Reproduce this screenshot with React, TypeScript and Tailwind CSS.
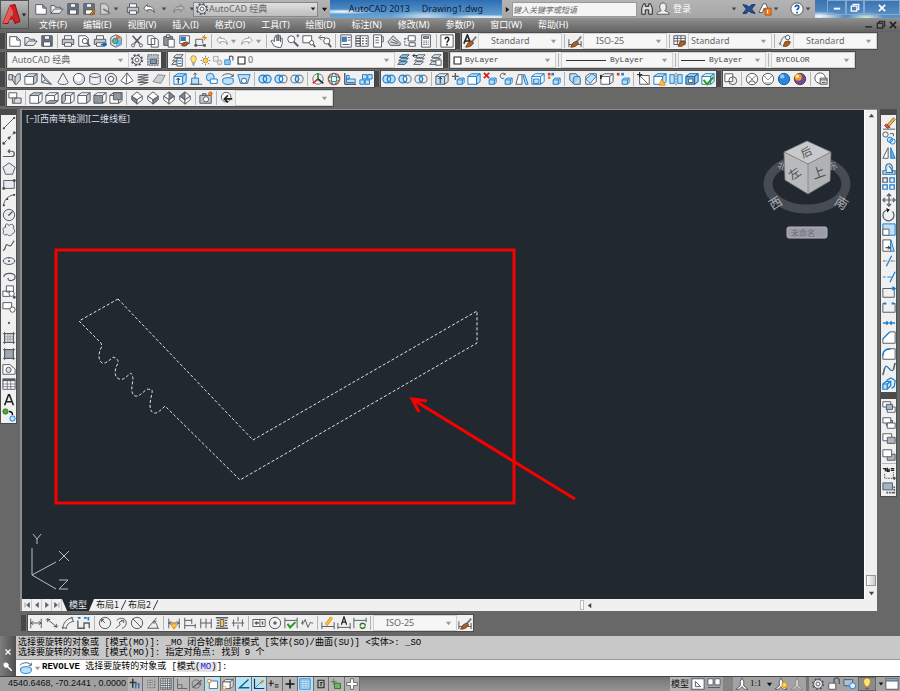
import type { ReactNode } from "react";
import clsx from "clsx";

const G = "#555c64";
const B = "#1b7fd0";
const L = "#bfe0f7";
const O = "#e08a1e";

const page = <path d="M2 3h8l4 4v7H2zM10 3v4h4" fill="#fff" />;
const folder = <path d="M1 13V4h4l1 2h6v2M1 13l4-5h10l-4 5z" fill="#e8edf2" />;
const floppy = (
  <>
    <path d="M2 2h12v12H2z" fill="#66737f" />
    <path d="M5 2h6v4H5zM4 9h8v5H4z" fill="#fff" />
  </>
);
const printer = (
  <>
    <path d="M4 6V2h8v4" fill="#fff" />
    <path d="M1.500 6h13v6h-13z" fill="#bcc4cc" />
    <path d="M4 10h8v4H4z" fill="#fff" />
  </>
);
const lens = (
  <>
    <circle cx="6" cy="6" r="4" fill="#fff" />
    <path d="m9 9 5 5" strokeWidth="2.200" />
  </>
);
const undo = <path d="M6 3 2 7l4 4V9c4-1 7 0 8 3 0-5-3-7-8-7z" fill="#fff" />;
const redo = <path d="m10 3 4 4-4 4V9c-4-1-7 0-8 3 0-5 3-7 8-7z" fill="#fff" />;
const brush = (
  <>
    <path d="m15 3-5 6" stroke="#777" strokeWidth="2" />
    <path d="m10 8-4 2-3 5c4 0 7-1 9-5z" fill="#a8602c" stroke="#7a3e14" />
  </>
);
const gear = (
  <>
    <circle cx="8" cy="8" r="6" strokeWidth="2" strokeDasharray="2.400 2.300" />
    <circle cx="8" cy="8" r="5" fill="#eee" />
    <circle cx="8" cy="8" r="2.200" fill="#fff" />
  </>
);
const bulb = (
  <>
    <path d="M6 11c0-2-2-3-2-6a4 4 0 0 1 8 0c0 3-2 4-2 6z" fill="#ffe27a" stroke="#a9822b" />
    <path d="M6 13h4M7 15h2" />
  </>
);
const sheets = <path d="m4 5 3-3h8l-3 3zM3 9l3-3h8l-3 3zM2 13l3-3h8l-3 3z" fill="#eef3f7" />;
const cubeWith = (front: string, top: string, side: string, color = G) => (
  <g stroke={color}>
    <path d="M1 5h10v9H1z" fill={front} />
    <path d="m1 5 4-3h10l-4 3z" fill={top} />
    <path d="m11 5 4-3v9l-4 3z" fill={side} />
  </g>
);
const smallCube = (
  <g stroke={B}>
    <path d="M7 9h6v5H7z" fill={L} />
    <path d="m7 9 2-2h6l-2 2m2-2v5l-2 2" fill="none" />
  </g>
);
const diamond = (a: string, b: string, c: string) => (
  <>
    <path d="m8 1 6 5-6 4-6-4z" fill={a} />
    <path d="M2 6v4l6 5v-5z" fill={b} />
    <path d="M14 6v4l-6 5v-5z" fill={c} />
  </>
);
const rings = (left: string, right: string, mid: string) => (
  <g strokeWidth="1.300">
    <circle cx="5.500" cy="8" r="4.500" fill={left} stroke={left === "none" ? "#7b8289" : B} />
    <circle cx="10.500" cy="8" r="4.500" fill={right} stroke={right === "none" ? "#7b8289" : B} />
    <path d="M8 4.300a4.500 4.500 0 0 1 0 7.400 4.500 4.500 0 0 1 0-7.400z" fill={mid} stroke={B} />
  </g>
);
const hdim = <path d="M2 3v11M14 3v11M2 8h12M5 6 2 8l3 2M11 6l3 2-3 2" />;
const stack = (a: string, b: string) => (
  <>
    <path d="M1 2h9v6H1z" fill={a} />
    <path d="M6 8h9v6H6z" fill={b} />
  </>
);

const drawings: Record<string, ReactNode> = {
  new: page,
  open: folder,
  save: floppy,
  saveas: <>{floppy}<path d="m9 14 5-6 1 2-4 5z" fill={O} stroke="#94590c" /></>,
  export: <><path d="M3 2h6l3 4v8H3z" fill="#d0d0d0" stroke="#777" /><path d="m6 8 8 5" stroke="#777" strokeWidth="2" /></>,
  print: printer,
  preview: <><path d="M2 2h8l3 3v9H2z" fill="#fff" /><circle cx="9" cy="8" r="3" fill="#fff" /><path d="m11 10 4 4" strokeWidth="2" /></>,
  publish: <>{printer}<path d="M9 12h6m-3-2 3 2-3 2" stroke="#1567b3" strokeWidth="2" /></>,
  dwf: <><path d="m8 1 6 3v8l-6 3-6-3V4z" fill="#d9e8ef" /><path d="M8 8V1l6 3z" fill="#e87435" stroke="none" /><path d="M8 8v7l6-3V5z" fill="#6bb4e3" stroke="none" /><circle cx="7" cy="8" r="3" fill="#7ab648" stroke={B} /></>,
  undo,
  redo,
  undoGray: <g stroke="#999">{undo}</g>,
  redoGray: <g stroke="#999">{redo}</g>,
  redoDim: <path d="m10 3 4 4-4 4V9c-4-1-7 0-8 3 0-5 3-7 8-7z" fill="#b9b9b9" stroke="#7d7d7d" />,
  cut: <><path d="m3 2 8 9M13 2 5 11" strokeWidth="1.800" /><circle cx="3.500" cy="13" r="1.800" /><circle cx="12.500" cy="13" r="1.800" /></>,
  copy: <path d="M2 2h6l2 2v8H2zM6 5h6l2 2v8H6z" fill="#fff" />,
  paste: <><path d="M2 3h10v10H2z" fill="#8f9194" /><path d="M5 1h4v3H5z" fill="#ddd" /><path d="M7 6h7v9H7z" fill="#fff" /></>,
  match: <><path d="M2 2h11v9H2z" fill="#fff" /><path d="M3 3h6v5H3z" fill="#317bb8" stroke="none" /><path d="m10 9-4 1-2 3c4 2 7 0 8-3z" fill="#a8602c" stroke="#7a3e14" /></>,
  block: <><path d="M2 6h8v5M2 6v7h10" /><path d="M12 1v6M9 4h6M10 2l4 4" stroke={O} /><path d="M1 12h2v2H1zM11 12h2v2h-2z" fill={G} /></>,
  pan: <path d="M5 14 1 8l2-1 2 2V4h1V2h2v6-7h2v7-6h2v7-4h2v6l-2 5z" fill="#fff" />,
  zoomrt: <>{lens}<path d="M12 2h3M13.500 0v4" /></>,
  zoomwin: <><path d="M1 2h10v8H1z" fill="#fff" /><circle cx="11" cy="10" r="2.500" fill="#fff" /><path d="m13 12 2 3" strokeWidth="2" /></>,
  zoomprev: <><circle cx="10" cy="8" r="3.500" fill="#fff" /><path d="m12 11 3 4" strokeWidth="2" /><path d="M8 4H2m2-3L1 4l3 3" /></>,
  props: <><path d="M2 1h12v14H2z" fill="#fff" /><path d="M3 3h6v6H3z" fill="#3a7fb8" stroke="none" /><path d="M10 4h3M10 7h3M4 12h8" /></>,
  dcenter: <><path d="M1 2h14v12H1z" fill="#fff" /><path d="M6 2v12M1 5h5M1 8h5M1 11h5M8 5h2M12 5h2M8 8h2M12 8h2M8 11h2M12 11h2" strokeWidth="1.500" /></>,
  palette: <><path d="M3 1h9v14H3z" fill="#fff" /><path d="M12 3h2v6h-2M5 4h4M5 7h4M5 10h4" /></>,
  sheetset: <path d="m1 9 6-7 8 8v3H4zM4 9l8 2M6 6l7 4" fill="#d7dbe0" />,
  markup: <><path d="M2 5h8v8H2z" strokeDasharray="2 1" /><path d="M6 2h8v6H6zM7 10h7v4H7z" fill="#fff" /></>,
  calc: <><path d="M3 1h10v14H3z" fill="#fff" /><path d="M5 3h6v2H5z" fill="#aaa" /><path d="M5 8h6M5 10h6M5 12h6" strokeDasharray="1.500 1" /></>,
  help: <><path d="M1 1h14v14H1z" fill="#fff" /><path d="M6 6c0-3 4-3 4 0 0 2-2 2-2 4M8 11v2" strokeWidth="1.800" stroke="#222" /></>,
  textstyle: <><path d="M1 11 5 1l4 10M2.500 8h5" stroke="#222" strokeWidth="1.800" />{brush}</>,
  dimstyle: <><path d="M1 6v9M15 8v7M1 12h14" />{brush}</>,
  tablestyle: <><path d="M1 2h13v10H1zM1 5h13M1 8h13M5 2v10M9 2v10" fill="#fff" /><path d="m12 8-4 1-2 5c4 1 7-1 8-5z" fill="#a8602c" stroke="#7a3e14" /></>,
  mlstyle: <><path d="M2 12C4 8 4 3 9 3M1 10l3 3" /><circle cx="11" cy="4" r="2.500" fill="#fff" /><path d="m12 8-4 1-2 5c4 1 7-1 8-5z" fill="#a8602c" stroke="#7a3e14" /></>,
  gear,
  wsave: <><path d="M2 2h12v12H2z" fill="#b4bcc4" strokeDasharray="2 1" /><path d="M5 7h7v5H5z" fill="#7f97ad" /></>,
  layers: <>{sheets}<path d="M8 6h6v9H8z" fill="#fff" /><path d="M9 9h4M9 12h4" stroke={B} /></>,
  bulb,
  sun: <><circle cx="8" cy="8" r="3.500" fill="#ffd34c" stroke="#a87a1b" /><path d="M8 1v2M8 13v2M1 8h2M13 8h2M3 3l1.500 1.500M12 12l1.500 1.500M13 3l-1.500 1.500M3 13l1.500-1.500" /></>,
  freeze: <g stroke="#999"><path d="M2 2h7v7H2z" fill="#eee" /><circle cx="11" cy="11" r="3.500" fill="#ddd" /></g>,
  unlock: <><path d="M1 7h8v7H1z" fill="#8cc8f0" stroke={B} /><path d="M8 7V3c0-2 5-2 5 0v5" strokeWidth="1.800" /></>,
  swatch: <path d="M3 3h10v10H3z" fill="#fff" stroke="#222" strokeWidth="1.600" />,
  layerCurrent: <path d="m4 5 3-3h8l-3 3zM3 9l3-3h8l-3 3zM2 13l3-3h8l-3 3z" fill="#9dcdf0" stroke="#33566f" />,
  layerPrev: <>{sheets}<path d="M6 3H1m2-2L1 3l2 2" stroke="#222" /></>,
  layerState: <>{sheets}<path d="M9 8h6v6H9z" fill="#fff" /></>,

  polysolid: <path d="M1 3h4v6H1zM5 3l3 3v8L5 9M8 6l3-4h3v7l-4 5H8" fill="#cfd4da" />,
  box: cubeWith("#fff", "#e9edf1", "#c3c9cf"),
  wedge: <path d="M2 2v10l11 2zM2 12l4-3 7 5M2 2l4 7" fill="#fff" />,
  cone: <path d="M8 1 2 12c1 3 11 3 12 0z" fill="#eef0f3" />,
  sphere: <><circle cx="8" cy="8" r="6.500" fill="#d3d9df" /><circle cx="7" cy="6.500" r="4" fill="#fff" stroke="none" /></>,
  cylinder: <path d="M2 4v8c1 3 11 3 12 0V4M2 4c1 3 11 3 12 0-1-3-11-3-12 0z" fill="#eef0f3" />,
  torus: <><circle cx="8" cy="8" r="6.500" fill="#e2e5e9" /><circle cx="8" cy="8" r="3" fill="#fff" /></>,
  pyramid: <path d="m8 1-7 9 6 4 8-4zM8 1 7 14" fill="#fff" />,
  helix: <path d="M2 3h12L2 6h12L2 9h12L2 12h12L4 15" strokeWidth="1.100" />,
  planar: <path d="m1 11 6-8 8 1-5 9z" fill="#c9cdd2" stroke="#888" />,
  extrude: <>{cubeWith("#eaf5fd", L, L, B)}<path d="M6 13V7M4 9l2-2 2 2" stroke="#123" /></>,
  presspull: <><path d="M3 7h8v7H3z" fill={L} stroke={B} /><path d="M7 7V1M5 3l2-2 2 2M1 14h14" /></>,
  sweep: <><circle cx="6" cy="6" r="4.500" fill={L} stroke={B} /><path d="M6 8h8v5H6z" fill="#fff" stroke={B} /></>,
  revolve: <><path d="M2 8c2-2 10-2 12 0v4c-2 3-10 3-12 0z" fill={L} stroke={B} /><path d="M1 5c3-4 11-4 13 0m0-3v3h-3" /></>,
  loft: <><path d="M1 3h14l-3 10H4z" fill={L} stroke={B} /><circle cx="8" cy="10" r="3" fill="#fff" /></>,
  union: rings(L, L, L),
  subtract: rings(L, "none", "#fff"),
  intersect: rings("none", "none", L),
  move3d: <><circle cx="8" cy="8" r="6" stroke="#777" /><path d="M8 8V1" stroke="#2b9b36" strokeWidth="2" /><path d="m2 13 6-5" stroke="#d33" strokeWidth="2" /><path d="m14 13-6-5" stroke="#234" strokeWidth="2" /></>,
  rotate3d: <><circle cx="8" cy="8" r="6.500" stroke="#d33" strokeWidth="1.500" /><ellipse cx="8" cy="8" rx="3" ry="6.500" stroke={B} /><ellipse cx="8" cy="8" rx="6.500" ry="3" stroke="#2b9b36" /></>,
  align3d: <><path d="M2 1v13M2 14h13" strokeWidth="1.600" /><path d="M4 8h10v4H4zM4 4h3v4H4z" fill={L} stroke={B} /></>,
  array3d: <g stroke={B} fill={L}><path d="M1 9h5v5H1zM7 9h5v5H7zM4 3h5v5H4zM10 3h5v5h-5z" /></g>,
  extrudeFace: <>{cubeWith(L, "#fff", "#dfeaf3")}<path d="M6 13V6M4 8l2-2 2 2" stroke="#036" /></>,
  moveFace: <>{smallCube}<path d="M5 1v8M1 5h8" strokeWidth="1.600" /></>,
  offsetFace: cubeWith("#fff", L, L, B),
  deleteFace: <>{smallCube}<path d="m1 1 6 6M7 1 1 7" stroke="#d32020" strokeWidth="2" /></>,
  rotateFace: <>{smallCube}<path d="M6 7a3 3 0 1 1 1-4M7 1v2H5" /></>,
  taperFace: <><path d="M1 14 4 3h4v11z" fill="#fff" /><path d="M9 3h2l4 11h-3z" fill={L} stroke={B} /></>,
  copyFace: <>{cubeWith("#fff", "#fff", "#fff", B)}<path d="M3 8h6v5H3z" fill={L} stroke={B} /></>,
  colorFace: <>{smallCube}<path d="M1 1h3v3H1z" fill="#d33" stroke="none" /><path d="M5 1h3v3H5z" fill={B} stroke="none" /><path d="M1 5h3v3H1z" fill={O} stroke="none" /></>,
  filletEdge: <><path d="M2 2h7l5 5v7H7L2 9z" fill={L} /><path d="M14 5H9a3 3 0 0 0-3 3v6" fill="#9dcdf0" stroke={B} /></>,
  chamferEdge: <><path d="M2 5 6 2h8v9l-4 3H2z" fill="#fff" /><path d="m2 8 7-6 5 3-7 8z" fill={L} stroke={B} /></>,
  copyEdge: <>{cubeWith("#fff", "#fff", "#eee")}<path d="M1 3v5" stroke="#111" strokeWidth="1.600" /></>,
  colorEdge: <>{smallCube}<path d="M1 1h3v3H1z" fill="#d33" stroke="none" /><path d="M6 1h3v3H6z" fill={B} stroke="none" /></>,
  imprint: <><path d="M3 4h11v10H3zM3 4l10 10" fill="#fff" /><path d="M3 0v6M0 3h6" stroke="#111" /></>,
  clean: <>{cubeWith("#fff", L, L, B)}<path d="m10 8 4 7H7z" fill="#ffc33b" stroke={O} /></>,
  separate: <><path d="M1 3h5v10H1zM10 3h5v10h-5z" fill={L} stroke={B} /><path d="M8 1v14" strokeDasharray="2 1" /></>,
  shell: <>{cubeWith("#5eb1e8", L, "#9dcdf0", "#175f9a")}<path d="M4 8h5v4H4z" fill="#fff" /></>,
  check: <>{cubeWith("#fff", "#fff", "#dfeaf3", B)}<path d="m3 9 4 5 7-8" stroke="#2b9b1c" strokeWidth="2.200" /></>,
  vs2d: <><path d="M1 2h9v9H1z" fill="#fff" /><circle cx="10" cy="10" r="4.500" /></>,
  vswire: <><circle cx="8" cy="8" r="6.500" fill="#fff" /><path d="m3 4 5 4 5-4M8 8l-4 5M8 8l4 5M4 12c2-2 6-2 8 0" strokeWidth=".8" /></>,
  vshidden: <><circle cx="8" cy="8" r="6.500" fill="#fff" /><path d="m3 4 5 5 5-5M5 12c2 1 4 1 6 0" strokeWidth=".8" /></>,
  vsreal: <><circle cx="8" cy="8" r="6.500" fill="#2b86d9" stroke="#1a61a5" /><circle cx="6" cy="5" r="2.500" fill="#8dc7f5" stroke="none" /></>,
  vsconcept: <><circle cx="8" cy="8" r="6.500" fill="#6b4a9b" stroke="#67402a" /><circle cx="6" cy="6" r="4" fill="#f0a030" stroke="none" /><circle cx="5" cy="5" r="1.800" fill="#ffe6a5" stroke="none" /></>,
  vsmanage: <><circle cx="7" cy="7" r="6" fill="#fff" /><path d="M7 7h8v7H7zM7 9h8M9 12h4" fill="#ddd" /></>,

  namedViews: <><path d="M1 2h9v6H1z" fill="#fff" /><path d="M5 8h10v6H5zM7 14v-4l3-2" fill="#ddd" /></>,
  vtop: cubeWith("#fff", "#c3c9cf", "#fff"),
  vbottom: <>{cubeWith("#fff", "#fff", "#fff")}<path d="m1 14 4-3h10l-4 3z" fill="#a4abb2" /></>,
  vleft: <>{cubeWith("#fff", "#fff", "#fff")}<path d="m1 5 4-3v9l-4 3z" fill="#b7bdc3" /></>,
  vright: cubeWith("#fff", "#fff", "#c3c9cf"),
  vfront: cubeWith("#8e969e", "#fff", "#fff"),
  vback: <>{cubeWith("#fff", "#fff", "#fff")}<path d="M5 2h9v8H5z" fill="#8e969e" /></>,
  isoSW: diamond("#fff", "#7d858d", "#fff"),
  isoSE: diamond("#fff", "#fff", "#7d858d"),
  isoNE: <>{diamond("#fff", "#fff", "#fff")}<path d="m8 1 6 5-6 4z" fill="#7d858d" /></>,
  isoNW: <>{diamond("#fff", "#fff", "#fff")}<path d="M8 1 2 6l6 4z" fill="#7d858d" /></>,
  camera: <><path d="M1 5h13v9H1zM4 5V3h4v2" fill="#c3c7cb" /><circle cx="8" cy="9.500" r="3" fill="#fff" /><circle cx="13" cy="3" r="2" fill="#f3872c" stroke="#d36010" /></>,
  viewPrev: <><circle cx="7" cy="7" r="5.500" fill="#fff" /><path d="M14 9H5m4-4L5 9l4 4" stroke="#222" strokeWidth="2" /></>,

  line: <><path d="M2 14 14 2" /><path d="M1 13h2v2H1zM13 1h2v2h-2z" fill="#333" stroke="none" /></>,
  xline: <><path d="M2 14 14 2" strokeDasharray="5 2" /><path d="M1 13h2v2H1zM7 7h2v2H7zM13 1h2v2h-2z" fill="#222" /></>,
  pline: <path d="M2 12h9a3 3 0 0 0 0-6H7M1 12h2M9 4 7 6l2 2" strokeWidth="1.400" />,
  polygon: <path d="m8 1 7 5-3 8H4L1 6z" fill="#e6ebef" />,
  rect: <><path d="M2 4h12v9H2z" fill="#e6ebef" /><path d="M1 12h2v2H1zM13 3h2v2h-2z" fill="#222" /></>,
  arc: <><path d="M2 14C2 8 7 3 14 2" /><path d="M1 13h2v2H1zM5 6h2v2H5zM13 1h2v2h-2z" fill="#333" stroke="none" /></>,
  circle: <><circle cx="8" cy="8" r="6.500" fill="#e6ebef" /><path d="m8 8 4-4M7 8h2" strokeWidth="1.600" /></>,
  cloud: <path d="M4 2c2-2 4 0 4 1 2-3 7-1 5 3 3 3 1 6-1 6-1 3-5 3-6 1-3 2-6-1-4-4-2-2 0-5 2-4z" fill="#e6ebef" />,
  spline: <path d="M1 13c4 0 2-9 6-6s4-2 7-5" strokeWidth="1.300" />,
  ellipse: <><ellipse cx="8" cy="8" rx="6.500" ry="4" fill="#e6ebef" /><path d="M7 8h2M1 8h1M14 8h1M8 4v1" strokeWidth="2" /></>,
  ellarc: <path d="M2 8c1-6 13-5 13 0 0 4-6 5-8 3M6 10h2" strokeWidth="1.300" />,
  insert: <><path d="M5 1h8v7H5zM1 7h8v6H1z" fill="#fff" /><circle cx="11" cy="10" r="3" fill="#fff" /><path d="M13 13h2v2h-2z" fill="#111" /></>,
  makeBlock: <><path d="M1 3h10v7H1z" fill="#fff" /><circle cx="12" cy="11" r="3" fill="#fff" /></>,
  point: <circle cx="8" cy="8" r="1.300" fill={G} stroke="none" />,
  hatch: <><path d="M3 3h10v10H3z" fill="#fff" /><path d="M1 3h14M1 13h14M3 1v14M13 1v14" /><path d="M3 6h10M3 8h10M3 10h10M6 3v10M8 3v10M10 3v10" strokeWidth=".5" /></>,
  gradient: <><path d="M3 3h10v10H3z" fill="#a3aab1" /><path d="M1 3h14M1 13h14M3 1v14M13 1v14" /></>,
  region: <><path d="M1 3h8l6 5v6H1z" fill="#fff" /><circle cx="7.500" cy="9" r="3" fill="#ddd" /></>,
  table: <><path d="M1 2h14v12H1z" fill="#fff" /><path d="M1 3.500h14" strokeWidth="2.500" /><path d="M1 8h14M1 11h14M6 4v10M10 4v10" strokeWidth=".8" /></>,
  mtext: <path d="m3 14 4.500-12h1L13 14M5 10h6" stroke="#222" strokeWidth="1.800" />,
  addsel: <><circle cx="4" cy="4" r="3" fill="#4fa93c" stroke="#2c7a1b" /><circle cx="12" cy="12" r="3" fill={L} stroke={B} /><path d="M8 4c3 0 4 1 4 4" stroke="#111" strokeWidth="1.600" /></>,

  erase: <><path d="m6 10 7-8 2 2-7 8z" fill="#f2c14c" stroke="#8f6420" /><path d="m3 11 2-2 4 4-3 1z" fill="#d45d4c" stroke="#963121" /><path d="M1 15h14" /></>,
  copyobj: <><circle cx="4" cy="4" r="3" /><circle cx="9" cy="10" r="3" fill={L} stroke={B} /><circle cx="12" cy="12" r="3" fill="none" stroke={B} /><path d="M9 3h4v3" /></>,
  mirror: <><path d="M7 2 1 14h6z" fill="#fff" /><path d="m10 2 5 12h-5z" fill="#5eb1e8" stroke={B} /></>,
  offset: <path d="M1 14v-4h4c-2-5 0-8 3-8s5 3 3 8h4v4zM4 12h8V9c-3-1-2-4-4-4" fill={L} stroke="#2f6f9f" strokeWidth="1.200" />,
  array: <g strokeWidth="1.400"><path d="M1 1h5v5H1z" /><path d="M9 1h5v5H9zM1 9h5v5H1zM9 9h5v5H9z" stroke={B} /></g>,
  move: <path d="M8 1v14M1 8h14M5.500 3.500 8 1l2.500 2.500M5.500 12.500 8 15l2.500-2.500M3.500 5.500 1 8l2.500 2.500M12.500 5.500 15 8l-2.500 2.500" strokeWidth="1.400" />,
  rotate: <><path d="M7 2a6.300 6.300 0 1 0 5 2" strokeWidth="1.400" /><path d="m5 0 4 2-3 3z" fill="#111" stroke="none" /></>,
  scale: <><path d="M1 1h14v13H1z" fill={L} stroke={B} /><path d="M1 7h7v7H1z" fill="#fff" /></>,
  stretch: <><path d="M1 1h9v13H1z" fill="#fff" /><path d="m10 1 4 13h-4z" fill={L} stroke={B} /><path d="M4 10h5M7 8l2 2-2 2" stroke="#111" /></>,
  trim: <><path d="M1 8h5M10 8h5" strokeDasharray="3 1" /><path d="m5 14 6-12" stroke={B} strokeWidth="1.500" /></>,
  extend: <><path d="M1 8h3M6 8h5" stroke={B} /><path d="m9 14 6-12" stroke={B} strokeWidth="1.500" /></>,
  breakpt: <><path d="M1 4h13v10H1V4" /><path d="M10 4h5M12 2l3 2-3 2" stroke={B} strokeWidth="1.600" /></>,
  break: <><path d="M4 4H1v10h14V4h-3" /><path d="M2 4h3M11 4h3" stroke={B} strokeWidth="2.400" /></>,
  join: <path d="M1 8h6m-2-2 2 2-2 2M15 8H9m2-2L9 8l2 2" stroke={B} strokeWidth="1.500" />,
  chamfer: <><path d="M1 14h14V1H9L1 9z" fill="#fff" /><path d="M1 9 9 1" stroke={B} strokeWidth="1.600" /></>,
  fillet: <><path d="M1 14h14V2H9C4 2 1 5 1 9z" fill="#fff" /><path d="M1 10c0-5 3-8 9-8" stroke={B} strokeWidth="1.600" /></>,
  blend: <><path d="M3 7 1 15M15 1l-2 8" strokeWidth="1.800" /><path d="M3 7c3-7 6 6 10 2" stroke={B} strokeWidth="1.500" /></>,
  explode: <><path d="m1 8 4-3h5v5l-4 4H1z" fill={L} stroke={B} strokeWidth="1.400" /><path d="m5 4 5-3 5 3-1 7-3 2M1 8h5v6M6 8l4-3" stroke={B} strokeWidth="1.400" /></>,
  front: <>{stack("#fff", "#fff")}<path d="M5 5h7v6H5z" fill="#9fb5c8" /></>,
  back: <><path d="M5 5h7v6H5z" fill="#aaa" />{stack("#fff", "#fff")}</>,
  above: <><path d="M1 2h10v8H1z" fill="#fff" /><path d="M6 6h9v7H6z" fill="#aeb4ba" /></>,
  under: <><path d="M6 7h9v7H6z" fill="#aeb4ba" /><path d="M1 2h10v8H1z" fill="#fff" /></>,
  textfront: <><path d="M1 3h3v3M6 2v4h2V3M10 3h4M10 5h4" strokeWidth="1.700" stroke="#222" /><path d="M3 9v5h10V7" strokeDasharray="2 1" /><path d="M13 13h2v2h-2z" fill="#111" /></>,
  hatchback: <><path d="M1 1h11v8H1z" fill="#9fb5c8" /><path d="M5 12h7v2M14 5v9" strokeDasharray="2 1" strokeWidth="2" /></>,

  dimlin: hdim,
  dimali: <path d="m1 5 3-3M12 14l3-3M3 4l10 8M3 7V4h3M13 9v3h-3" />,
  dimarc: <path d="M2 15C2 8 7 2 14 2M6 15c0-5 3-8 9-9M1 13l5 1M12 1l2 5" />,
  dimord: <><path d="M1 5v9h8M8 14V8h6v6" strokeWidth="1.500" /><path d="M1 2h3M8 2h3M13 1v4" stroke={B} strokeWidth="2" /></>,
  dimrad: <><circle cx="8" cy="8" r="6.500" /><path d="m8 8-4-4M4 7V4h3" /></>,
  dimjog: <path d="M3 5c4-4 11-3 11 3 0 4-3 6-5 6M2 14l5-4-1-3 5-2M8 5h3v3" />,
  dimdia: <><circle cx="8" cy="8" r="6.500" /><path d="m3 3 10 10" /></>,
  dimang: <path d="M12 2 2 14h13M9 6c3 2 4 4 4 8M9 9V6h3" />,
  qdim: <>{hdim}<path d="m8 7 3 4-3 4-3-4z" fill="#ffc33b" stroke={O} /></>,
  dimbase: <path d="M2 2v13M2 5h8M10 3v6M2 11h12M14 9v5" />,
  dimcont: <path d="M2 3v11M8 3v11M14 3v11M2 8h12" />,
  dimspace: <><path d="M1 2h14M1 14h14M2 5h3M2 8h3M2 11h3M11 5h3M11 8h3M11 11h3" strokeWidth="1.600" /><path d="M6 4h4v8H6z" fill="#ffc33b" /></>,
  dimbreak: <path d="M8 1v5M8 10v5M1 8h4M3 4v8M11 8h4M13 4v8M5 8h6" />,
  tol: <><path d="M1 4h14v8H1zM9 4v8" fill="#fff" /><path d="M3 8h5M5 6v4M12 6v4" strokeWidth="1.800" /></>,
  center: <><circle cx="8" cy="8" r="6.500" /><path d="M8 6v4M6 8h4" strokeWidth="1.700" /></>,
  inspect: <><path d="M1 2v12M15 2v12M1 5h14" /><path d="m4 9 3 4 6-6" stroke="#2b9b1c" strokeWidth="2.400" /></>,
  jogline: <path d="M1 8h3l2-4 3 9 3-6 1 1h2M3 5v5" />,
  dimedit: <><path d="M1 7v8M15 7v8M1 12h14" /><path d="m5 9 6-8 2 2-6 8z" fill="#ffc33b" stroke={O} /></>,
  dimtedit: <><path d="M1 8v7M15 8v7M1 13h14" /><path d="m5 10 3-9 3 9M6 7h4" stroke="#222" strokeWidth="1.400" /></>,
  dimupdate: <><path d="M1 2v12M15 2v5M1 5h14" /><path d="M8 11c1-4 6-3 6 0M14 12c-1 3-5 3-6 0" stroke="#2b7b1c" strokeWidth="1.600" /></>,

  infer: <><path d="M5 1v12M1 6h9" strokeWidth="2" stroke="#333" /><path d="M9 6v8M13 7v7" stroke={B} strokeWidth="2" /><path d="M9 8h5" stroke="#c33" /></>,
  snap: <path d="M3 3h8M3 6h8M3 9h8M13 2v11H3" strokeDasharray="1 1" strokeWidth="1.600" />,
  grid: <><path d="M1 1h14v14H1z" fill="#fff" /><path d="M4 1v14M7 1v14M10 1v14M13 1v14M1 4h14M1 7h14M1 10h14M1 13h14" /></>,
  ortho: <path d="M2 1v13h13M2 9h6v5" />,
  polar: <><circle cx="7" cy="8" r="5.500" /><path d="M2 13 14 3M7 8h7" strokeWidth="1.600" /></>,
  osnap: <><path d="M3 4h11v10H3z" fill="#fff" /><path d="M1 2h4v4H1z" fill="#fff" stroke={O} /></>,
  osnap3d: <>{cubeWith("#fff", "#eee", "#ddd")}<circle cx="3" cy="13" r="2" fill="#fff" stroke={O} /></>,
  otrack: <path d="M14 2 2 13h13" stroke="#08628f" strokeWidth="1.800" />,
  ducs: <><path d="M2 1v13h13" stroke="#235" strokeWidth="1.600" /><path d="m3 13 8-8" stroke={B} /><path d="m9 6 4-4 2 2-4 4z" fill={O} stroke="none" /></>,
  dyn: <path d="M4 3v8M1 7h7M9 9h5M9 12h5" stroke="#222" strokeWidth="1.500" />,
  lwt: <path d="M8 2v12M2 8h12" stroke="#111" strokeWidth="2" />,
  transp: <><path d="M1 1h14v14H1z" fill="#b9dcf5" stroke={B} /><path d="M1 3h14M1 6h14M1 9h14M1 12h14" strokeDasharray="1 1" stroke="#4a8fc8" /></>,
  quick: <path d="M4 3h8v10H4zM7 6h3M8 6v5" stroke="#222" strokeWidth="1.400" />,
  cycle: <><path d="M5 1v8M1 5h8" /><path d="M6 7h8v7H6z" fill="#70b564" stroke="#24701b" /></>,
  annomon: <path d="M6 1h4v5h5v4h-5v5H6v-5H1V6h5z" fill="#fff" />,
  layoutView: <><path d="M1 2h14v12H1z" fill="#fff" /><path d="M5 5v6h6z" /></>,
  quickView: <path d="M1 2h6v7H1zM9 2h6v7H9zM1 12h14" fill="#fff" />,
  scaleicon: <path d="M8 1 6 5v5l-5 4h4l3-3 3 3h4l-5-4V5z" fill="#fff" />,
  annovis: <><path d="M8 1 6 5v5l-5 4h4l3-3 3 3h4l-5-4V5z" fill="#fff" /><circle cx="12" cy="9" r="3" fill="#ffd34c" stroke={O} /></>,
  annoauto: <path d="M8 1 6 5v5l-5 4h4l3-3 3 3h4l-5-4V5z" fill="#ccc" stroke="#888" />,
  lock: <><path d="M2 7h8v7H2z" fill="#fff" /><path d="M8 7V4c0-4 6-4 6 0v4" strokeWidth="1.600" /></>,
  hw: <><path d="M1 3h10v7H1z" fill="#a8c4dc" /><circle cx="11" cy="10" r="3.500" fill="#d8eefc" stroke={B} /></>,
  cleanscr: <><path d="M1 2h14v12H1z" fill="#fff" /><path d="M1 4h14" strokeWidth="2.500" stroke="#68819a" /></>,

  binoculars: <path d="M2 14V7l2-5h2v3h4V2h2l2 5v7h-4V9H6v5z" fill="#ddd" stroke="#222" />,
  person: <path d="M1 14c0-3 3-3 5-4-3-3-2-9 2-9s5 6 2 9c2 1 5 1 5 4z" fill="#eee" />,
  exchange: <path d="m1 3 5 1 2 2 3-3h4l-4 5 4 5-5-1-2-2-3 3H1l4-5z" fill="#264f91" stroke="#1b3567" />,
  stayon: <><path d="M6 2 1 12h4l2-5 2 5h4L9 2z" fill="#fff" /><path d="M8 7h7v8H8z" fill="#ef7b22" stroke="#b95a10" /><path d="M11 9v4" stroke="#fff" /></>,
  infohelp: <><circle cx="8" cy="8" r="7" fill="#fff" /><path d="M6 6c0-3 4-3 4 0 0 2-2 2-2 3.500M8 11v2" stroke="#1b5fae" strokeWidth="2" /></>,
  wmin: <path d="M3 9h10" stroke="#fff" strokeWidth="3" />,
  wmax: <path d="M5 5V2h9v8h-3M2 5h9v8H2z" stroke="#fff" strokeWidth="2" />,
  wclose: <path d="m3 3 10 10M13 3 3 13" stroke="#fff" strokeWidth="2.600" />,
  mmin: <path d="M2 11h11" stroke="#222" strokeWidth="2.200" />,
  mmax: <path d="M5 5V2h9v8h-3M2 5h9v8H2z" stroke="#222" strokeWidth="1.800" />,
  mclose: <path d="m3 3 10 10M13 3 3 13" stroke="#222" strokeWidth="2.600" />,
  cclose: <path d="m3 3 10 10M13 3 3 13" stroke="#fff" strokeWidth="2.400" />,
  wrench: <path d="m14 14-8-8M2 4c0 4 3 5 5 3s1-5-3-5l2 3-2 1z" stroke="#fff" strokeWidth="2.400" />,
  first: <path d="M4 3v10M13 3 7 8l6 5z" fill={G} />,
  prev: <path d="M11 3 5 8l6 5z" fill={G} />,
  next: <path d="m5 3 6 5-6 5z" fill={G} />,
  last: <path d="M12 3v10M3 3l6 5-6 5z" fill={G} />,
};

const Icon = ({ name, className = "size-3.5" }: { name: string; className?: string }) => (
  <svg viewBox="0 0 16 16" fill="none" stroke={G} strokeWidth="1.100" className={clsx("shrink-0", className)} aria-hidden="true">
    {drawings[name]}
  </svg>
);

const Tool = ({ name, className }: { name: string; className?: string }) => (
  <button type="button" aria-label={name} className={clsx("flex shrink-0 items-center justify-center", className ?? "h-4 w-4")}>
    <Icon name={name} />
  </button>
);

const Caret = ({ className = "size-[7px] text-[#444]" }: { className?: string }) => (
  <svg viewBox="0 0 8 8" className={clsx("shrink-0", className)} aria-hidden="true">
    <path d="M1 2h6L4 6z" fill="currentColor" />
  </svg>
);

// "|" stands for a separator, "v" for a small drop-down arrow
const Tools = ({ items }: { items: string }) => (
  <>
    {items.split(" ").map((item, i) => {
      if (item === "|") return <span key={i} className="mx-0.5 my-px w-px shrink-0 self-stretch bg-[#b5b5b5]" />;
      if (item === "v") return <Caret key={i} className="mr-0.5 size-[7px] text-[#999]" />;
      return <Tool key={i} name={item} />;
    })}
  </>
);

const Grip = () => <span className="h-4 w-[7px] shrink-0 border-r-2 border-[#777] bg-[#474747]" />;

const Bar = ({ children }: { children: ReactNode }) => (
  <div className="flex h-4 shrink-0 items-center bg-[#f0f0f0] shadow-[0_0_0_1px_#4d4d4d]">{children}</div>
);

type ComboProps = {
  label: string;
  value: string;
  className: string;
  textClass?: string;
  children?: ReactNode;
};

const Combo = ({ label, value, className, textClass = "font-['Noto_Sans','Noto_Sans_CJK_SC',sans-serif] text-[9px] text-[#666]", children }: ComboProps) => (
  <label className={clsx("relative flex h-4 shrink-0 items-center border border-[#d0d0d0] bg-[#f6f6f6]", className)}>
    {children}
    <select aria-label={label} className={clsx("h-full min-w-0 flex-1 appearance-none bg-transparent leading-3 outline-none", textClass)}>
      <option>{value}</option>
    </select>
    <Caret className="mr-1 size-[7px] text-[#999]" />
  </label>
);

const mono = "font-['Liberation_Mono','Noto_Sans_CJK_SC',monospace] text-[8px] text-[#444]";

const menus = ["文件(F)", "编辑(E)", "视图(V)", "插入(I)", "格式(O)", "工具(T)", "绘图(D)", "标注(N)", "修改(M)", "参数(P)", "窗口(W)", "帮助(H)"];

const Header = () => (
  <header className="flex h-8 bg-gradient-to-b from-[#b4b4b4] to-[#9b9b9b]">
    <button type="button" aria-label="Application menu" className="z-10 flex h-[29px] w-[29px] shrink-0 items-center border border-[#555] bg-gradient-to-b from-[#bcbcbc] to-[#777]">
      <svg viewBox="0 0 20 24" className="h-[25px] w-5" aria-hidden="true">
        <path d="M2 21 9 3l5-1 5 17-5 2-2-5-4 1-1 4z" fill="#d31f26" stroke="#8b1015" />
        <path d="M9 3 2 21l5-1 5-11z" fill="#ee5750" />
        <path d="m9 13 2-5 1 5z" fill="#8f8f8f" />
      </svg>
      <Caret className="size-1.5 text-[#222]" />
    </button>
    <div className="flex min-w-0 flex-1 flex-col">
      <div className="flex h-[18px] items-center">
        <div className="flex w-[164px] shrink-0 items-center pl-1">
          <Tools items="new open save saveas export" />
          <Caret className="mr-1.5 size-1.5 text-[#444]" />
          <Tools items="print undo" />
          <Caret className="mx-1 size-1.5 text-[#444]" />
          <Tools items="redoDim" />
          <Caret className="ml-0.5 size-1.5 text-[#444]" />
        </div>
        <label className="flex h-[15px] w-[125px] shrink-0 items-center border border-[#888] bg-gradient-to-b from-[#e0e0e0] to-[#bdbdbd] px-px">
          <Icon name="gear" />
          <select aria-label="Workspace" className="min-w-0 flex-1 appearance-none bg-transparent font-['Noto_Sans','Noto_Sans_CJK_SC',sans-serif] text-[9px] leading-3 text-[#666] outline-none">
            <option>AutoCAD 经典</option>
          </select>
          <Caret className="size-1.5 text-[#222]" />
        </label>
        <span className="flex w-3 shrink-0 justify-center"><Caret className="size-[7px] text-[#111]" /></span>
        <h1 className="flex h-full min-w-0 flex-1 items-center justify-center gap-3 bg-[radial-gradient(ellipse_at_7%_65%,#fff_0%,transparent_16%),radial-gradient(ellipse_at_97%_95%,#f2faf8_0%,transparent_10%),radial-gradient(ellipse_at_84%_95%,#eaf6f4_0%,transparent_12%),radial-gradient(ellipse_at_55%_90%,#c4dcec_0%,transparent_25%),linear-gradient(#2d6db3,#6ba7d7)] font-['Noto_Sans',sans-serif] text-[9px] text-[#10203a]">
          <span>AutoCAD 2013</span>
          <span>Drawing1.dwg</span>
        </h1>
        <span className="flex w-2.5 shrink-0 justify-center"><Caret className="size-[7px] -rotate-90 text-[#111]" /></span>
        <input aria-label="搜索" placeholder="键入关键字或短语" className="h-[15px] w-[125px] shrink-0 border border-[#999] bg-[#f4f4f4] font-['Noto_Sans_CJK_SC',sans-serif] text-[8px] italic outline-none placeholder:text-[#666]" />
        <div className="flex w-[178px] shrink-0 items-center pl-0.5">
          <Tools items="binoculars person" />
          <button type="button" className="ml-0.5 shrink-0 whitespace-nowrap font-['Noto_Sans_CJK_SC',sans-serif] text-[9px] leading-3 text-white">登录</button>
          <span className="flex-1" />
          <Caret className="mr-1 size-1.5 text-[#444]" />
          <Tools items="exchange stayon" />
          <Caret className="mr-2.5 size-1.5 text-[#444]" />
          <Tool name="infohelp" />
          <Caret className="mr-1 size-1.5 text-[#444]" />
        </div>
        <div className="flex h-full w-[85px] shrink-0 items-start bg-[radial-gradient(ellipse_at_5%_90%,#fff_0%,transparent_22%),radial-gradient(ellipse_at_60%_100%,#dcefd9_0%,transparent_25%),linear-gradient(#3a72ae,#5c94c8)] pl-3">
          <button type="button" aria-label="Minimize" className="flex h-[15px] w-[19px] items-center justify-center border border-[#83a9cf]"><Icon name="wmin" className="size-2.5" /></button>
          <button type="button" aria-label="Restore" className="flex h-[15px] w-[18px] items-center justify-center border border-[#83a9cf]"><Icon name="wmax" className="size-2.5" /></button>
          <button type="button" aria-label="Close" className="flex h-[15px] flex-1 items-center justify-center border border-[#83a9cf]"><Icon name="wclose" className="size-2.5" /></button>
        </div>
      </div>
      <nav className="-ml-[29px] flex h-3.5 items-center bg-gradient-to-b from-[#909090] to-[#626262] pl-[39px] pr-0.5">
        <div className="flex flex-1 gap-4">
          {menus.map((item) => (
            <button key={item} type="button" className="whitespace-nowrap font-['Noto_Sans','Noto_Sans_CJK_SC',sans-serif] text-[9px] leading-3 text-white">
              {item}
            </button>
          ))}
        </div>
        <div className="flex gap-0.5">
          <button type="button" aria-label="Minimize drawing"><Icon name="mmin" className="size-2.5" /></button>
          <button type="button" aria-label="Restore drawing"><Icon name="mmax" className="size-2.5" /></button>
          <button type="button" aria-label="Close drawing"><Icon name="mclose" className="size-2.5" /></button>
        </div>
      </nav>
    </div>
  </header>
);

const Toolbars = () => (
  <div className="flex flex-col gap-[3px] overflow-hidden pb-[3px] pt-px">
    <div className="flex">
      <Grip />
      <Bar>
        <Tools items="new open save | print preview publish dwf | cut copy paste match block | undoGray v redoGray v | pan zoomrt zoomwin zoomprev | props dcenter palette sheetset markup calc | help" />
      </Bar>
      <Grip />
      <Bar>
        <Tool name="textstyle" />
        <Combo label="Text style" value="Standard" className="w-[84px] pl-3" />
        <Tools items="| dimstyle" />
        <Combo label="Dimension style" value="ISO-25" className="w-[84px] pl-3" />
        <Tools items="| tablestyle" />
        <Combo label="Table style" value="Standard" className="w-[84px] pl-0.5" />
        <Tools items="| mlstyle" />
        <Combo label="Multileader style" value="Standard" className="w-[84px] pl-3" />
      </Bar>
    </div>
    <div className="flex">
      <Grip />
      <Bar>
        <Combo label="Workspace" value="AutoCAD 经典" className="w-[122px] pl-1" />
        <Tools items="gear wsave" />
      </Bar>
      <Grip />
      <Bar>
        <span className="w-px" />
        <Tool name="layers" />
        <Combo label="Layer" value="0" className="w-[210px] gap-px pl-0.5">
          {["bulb", "sun", "freeze", "unlock", "swatch"].map((name) => <Icon key={name} name={name} className="size-[11px]" />)}
        </Combo>
        <Tools items="layerCurrent layerPrev layerState" />
      </Bar>
      <Grip />
      <Bar>
        <Combo label="Color" value="ByLayer" className="w-[106px] gap-0.5 pl-px" textClass={mono}>
          <Icon name="swatch" className="size-[11px]" />
        </Combo>
        <Tools items="|" />
        <Combo label="Linetype" value="ByLayer" className="w-[112px] gap-1 pl-1" textClass={mono}>
          <span className="h-px w-10 bg-[#333]" />
        </Combo>
        <Tools items="|" />
        <Combo label="Lineweight" value="ByLayer" className="w-[88px] gap-1 pl-0.5" textClass={mono}>
          <span className="h-px w-6 bg-[#333]" />
        </Combo>
        <Tools items="|" />
        <Combo label="Plot style" value="BYCOLOR" className="w-[84px] pl-1" textClass={mono} />
      </Bar>
    </div>
    <div className="flex">
      <Grip />
      <Bar>
        <Tools items="polysolid box wedge cone sphere cylinder torus pyramid helix planar | extrude presspull sweep revolve loft | union subtract intersect | move3d rotate3d align3d array3d" />
      </Bar>
      <Grip />
      <Bar>
        <Tools items="union subtract intersect | extrudeFace moveFace offsetFace deleteFace rotateFace taperFace copyFace colorFace | filletEdge chamferEdge copyEdge colorEdge | imprint clean separate shell check" />
      </Bar>
      <Grip />
      <Bar>
        <Tools items="vs2d | vswire vshidden vsreal vsconcept | vsmanage" />
      </Bar>
    </div>
    <div className="flex">
      <Grip />
      <Bar>
        <Tools items="namedViews | vtop vbottom vleft vright vfront vback | isoSW isoSE isoNE isoNW | camera | viewPrev" />
        <Combo label="View" value="" className="w-[98px]" />
      </Bar>
    </div>
  </div>
);

const SideBar = ({ items, className }: { items: string; className: string }) => (
  <div className="w-[17px] border border-[#4d4d4d] bg-[#f0f0f0]">
    <div className="h-[5px] bg-[#4a4a4a]" />
    <div className={clsx("flex flex-col items-center justify-between", className)}>
      {items.split(" ").map((name, i) =>
        name === "|" ? <span key={i} className="h-px w-3.5 bg-[#b5b5b5]" /> : <Tool key={i} name={name} className="h-[15px] w-[15px]" />
      )}
    </div>
  </div>
);

const ViewCube = () => (
  <g fontFamily="'Noto Sans CJK SC', sans-serif">
    <ellipse cx="807" cy="184" rx="39" ry="25" fill="none" stroke="#464b54" strokeWidth="9" />
    <g fill="#a9acb0" fontSize="13" textAnchor="middle">
      <text transform="translate(778 207) rotate(-32)">西</text>
      <text transform="translate(839 207) rotate(32)">南</text>
      <text transform="translate(781 169) rotate(20)" fontSize="9">北</text>
      <text transform="translate(834 169) rotate(-20)" fontSize="9">东</text>
    </g>
    <path d="m807 141 24 11-23 12-24-12z" fill="#c7c9ca" />
    <path d="m784 152 24 12v30l-23-14z" fill="#b8babb" />
    <path d="m831 152-1 29-22 13v-30z" fill="#b0b2b4" />
    <path d="m784 152 24 12 23-12M808 164v30M807 141l-23 11 1 28 23 14 22-13 1-29z" fill="none" stroke="#777b80" strokeWidth=".7" />
    <g fill="#4b4f54" textAnchor="middle">
      <text transform="translate(808 156) rotate(-25)" fontSize="11">后</text>
      <text transform="translate(797 177) rotate(-35)" fontSize="12">左</text>
      <text transform="translate(820 177) rotate(-20)" fontSize="13">上</text>
    </g>
    <rect x="787" y="227" width="40" height="11" rx="2" fill="#9b9ca7" stroke="#b5b6bf" />
    <text x="791" y="236" fontSize="8" fill="#6b6c76">未命名</text>
  </g>
);

const Drawing = () => (
  <svg className="absolute inset-0 h-full w-full" role="img" aria-label="Model space">
    <g transform="translate(-22 -110)">
      <path
        d="M118 299 253 440 477 311V343L240 480 165 406C161 410 157 414 154 413 148 411 150 402 152 393 153 388 150 390 147 389 142 393 139 397 135 396 130 393 132 386 133 380 133 375 131 374 131 373 127 376 123 381 119 379 113 376 115 369 118 363 119 360 116 358 113 357 109 361 105 364 102 363 98 360 98 353 102 346L101 343 79 321z"
        fill="none"
        stroke="#dfe3e6"
        strokeWidth="1"
        strokeDasharray="3 2"
      />
      <path d="M56 250H514V503H56z" fill="none" stroke="#f60000" strokeWidth="3" />
      <path d="M575 499 412 399M427 401 412 399 419 412" fill="none" stroke="#f60000" strokeWidth="3" />
      <path d="M32 548V575L56 562M32 575 56 589" fill="none" stroke="#b9bdc2" />
      <path d="m33 534 4 5 4-5M37 539v5M59 551l10 10M69 551 59 561M59 580h9l-9 9h9" fill="none" stroke="#b9bdc2" />
      <ViewCube />
    </g>
  </svg>
);

const Workspace = () => (
  <main className="flex flex-1">
    <aside className="w-5 shrink-0">
      <SideBar
        className="h-[308px]"
        items="line xline pline polygon rect arc circle cloud spline ellipse ellarc insert makeBlock point hatch gradient region table mtext addsel"
      />
    </aside>
    <section className="flex min-w-0 flex-1 flex-col border-l-2 border-t border-[#8d8d8d]">
      <div className="flex flex-1">
        <div className="relative min-w-0 flex-1 bg-[#212830]">
          <Drawing />
          <p className="relative px-1 pt-[3px] font-['Noto_Sans','Noto_Sans_CJK_SC',sans-serif] text-[9px] leading-3 text-[#dadde0]">
            [−][西南等轴测][二维线框]
          </p>
        </div>
        <div className="flex w-[13px] shrink-0 flex-col items-center justify-between border-l border-white bg-[#f0f0f0] py-0.5">
          <Caret className="size-[7px] rotate-180 text-[#444]" />
          <div className="flex flex-col items-center gap-1">
            <span className="h-[11px] w-2.5 border border-[#999] bg-gradient-to-r from-white to-[#ccc]" />
            <Caret />
          </div>
        </div>
      </div>
      <div className="flex h-3 items-center bg-[#f0f0f0]" role="tablist">
        {["first", "prev", "next", "last"].map((name) => (
          <button key={name} type="button" aria-label={name} className="flex h-3 w-2.5 items-center justify-center border-r border-[#ccc]">
            <Icon name={name} className="size-2" />
          </button>
        ))}
        <button type="button" role="tab" aria-selected="true" className="h-3 w-8 bg-[#212830] font-['Noto_Sans_CJK_SC',sans-serif] text-[9px] leading-3 text-[#e5e5e5] [clip-path:polygon(0_0,100%_0,84%_100%,16%_100%)]">
          模型
        </button>
        {["布局1", "布局2"].map((name) => (
          <button key={name} type="button" role="tab" aria-selected="false" className="flex h-3 w-8 items-center justify-between whitespace-nowrap pl-0.5 font-['Noto_Sans_CJK_SC',sans-serif] text-[9px] leading-3 text-[#222]">
            {name}
            <svg viewBox="0 0 5 12" className="h-3 w-[5px]" aria-hidden="true"><path d="M5 1 0 11" stroke="#333" /></svg>
          </button>
        ))}
        <span className="flex-[423]" />
        <span className="h-2.5 w-1 border border-[#bbb] bg-white" />
        <Caret className="ml-0.5 size-[7px] rotate-90 text-[#444]" />
        <span className="flex-[285]" />
      </div>
    </section>
    <aside className="flex w-[23px] shrink-0 flex-col items-center">
      <SideBar
        className="h-[277px]"
        items="erase copyobj mirror offset array move rotate scale stretch trim extend breakpt break join chamfer fillet blend explode"
      />
      <SideBar className="h-[97px]" items="front back above under | textfront hatchback" />
    </aside>
  </main>
);

const CommandLine = () => (
  <section className="flex h-10 shrink-0 font-['Liberation_Mono','Noto_Sans_CJK_SC',monospace] text-[9px] text-black">
    <div className="flex w-4 shrink-0 flex-col items-center justify-end gap-1.5 bg-gradient-to-r from-[#7e7e7e] to-[#505050] pb-1">
      <button type="button" aria-label="Close command line"><Icon name="cclose" className="size-2" /></button>
      <button type="button" aria-label="Customize"><Icon name="wrench" className="size-2.5" /></button>
    </div>
    <div className="flex min-w-0 flex-1 flex-col">
      <div className="h-6 border-b border-[#999] bg-[#c8c8c8] pl-0.5 pt-0.5 leading-[10px]">
        <p className="whitespace-pre">选择要旋转的对象或 [模式(MO)]: _MO 闭合轮廓创建模式 [实体(SO)/曲面(SU)] &lt;实体&gt;: _SO</p>
        <p className="whitespace-pre">选择要旋转的对象或 [模式(MO)]: 指定对角点: 找到 9 个</p>
      </div>
      <div className="flex flex-1 items-center bg-white pl-0.5">
        <Tool name="revolve" />
        <Caret className="size-[7px] text-[#999]" />
        <label htmlFor="command" className="ml-px whitespace-pre">
          <b>REVOLVE</b> 选择要旋转的对象或 [<span className="bg-[#e2e2e2]">模式(<span className="text-[#1717e0]">MO</span>)</span>]:
        </label>
        <input id="command" className="min-w-0 flex-1 outline-none" />
      </div>
    </div>
  </section>
);

const toggles = ["infer", "snap", "grid", "ortho", "polar", "osnap", "osnap3d", "otrack", "ducs", "dyn", "lwt", "transp", "quick", "cycle", "annomon"];
const active = ["osnap", "otrack", "ducs", "transp"];

const StatusBar = () => (
  <footer className="flex h-[15px] shrink-0 items-center border-t border-[#444] bg-gradient-to-b from-[#747474] to-[#969696]">
    <div className="flex h-full w-32 shrink-0 items-center whitespace-pre bg-[#a0a0a0] pl-2 font-['Liberation_Sans',sans-serif] text-[9px] text-[#111]">
      4540.6468, -70.2441 , 0.0000
    </div>
    <div className="flex h-full w-[232px] shrink-0">
      {toggles.map((name) => (
        <button
          key={name}
          type="button"
          aria-label={name}
          aria-pressed={active.includes(name)}
          className={clsx("flex min-w-0 flex-1 items-center justify-center border-r border-[#6f6f6f]", active.includes(name) ? "bg-[#b9e3f4]" : "bg-[#b5b5b5]")}
        >
          <Icon name={name} className="size-3" />
        </button>
      ))}
    </div>
    <span className="flex-1" />
    <div className="flex h-full w-[230px] shrink-0 items-center bg-[#a3a3a3]">
      <button type="button" className="h-full w-5 shrink-0 whitespace-nowrap bg-[#b5b5b5] font-['Noto_Sans_CJK_SC',sans-serif] text-[9px] leading-3 text-[#111]">模型</button>
      <Tools items="layoutView quickView" />
      <span className="mx-px h-full w-2.5 shrink-0 bg-[#858585]" />
      <Tool name="scaleicon" />
      <button type="button" className="flex shrink-0 items-center font-['Liberation_Serif',serif] text-[9px] text-[#111]">
        1:1
        <Caret className="ml-1 size-[7px] text-[#111]" />
      </button>
      <Tools items="annovis annoauto" />
      <span className="mx-px h-full w-[3px] shrink-0 bg-[#777]" />
      <Tools items="gear lock hw" />
      <span className="flex h-full w-[18px] shrink-0 justify-center border border-[#666] bg-[#8b8b8b]"><Tool name="bulb" className="h-full w-4" /></span>
      <span className="flex-1" />
      <Caret className="size-1.5 text-[#111]" />
      <Tool name="cleanscr" />
    </div>
  </footer>
);

const App = () => (
  <div className="flex min-h-screen flex-col overflow-hidden bg-[#686868]">
    <Header />
    <Toolbars />
    <Workspace />
    <div className="flex h-[25px] shrink-0 pl-[21px] pt-1">
      <Grip />
      <Bar>
        <Tools items="dimlin dimali dimarc dimord | dimrad dimjog dimdia dimang | qdim dimbase dimcont dimspace dimbreak | tol center inspect jogline | dimedit dimtedit dimupdate |" />
        <Combo label="Dimension style" value="ISO-25" className="w-[84px] pl-3" />
        <Tool name="dimstyle" />
      </Bar>
    </div>
    <CommandLine />
    <StatusBar />
  </div>
);

export default App;
